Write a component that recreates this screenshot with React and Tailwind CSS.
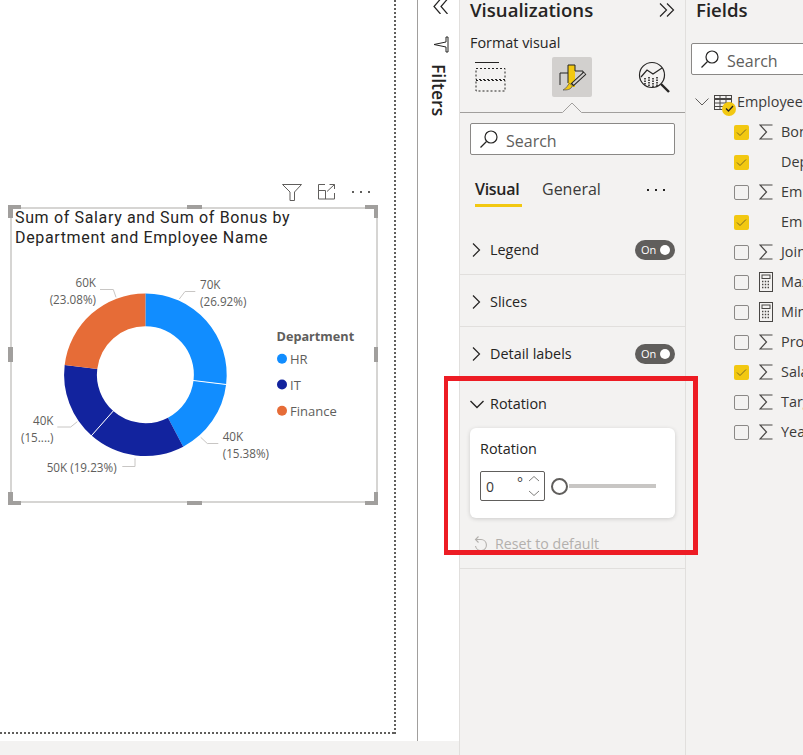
import React from 'react';

const SLICES = [
  { pct: 26.92, color: '#118DFF' },
  { pct: 15.38, color: '#118DFF' },
  { pct: 19.23, color: '#12239E' },
  { pct: 15.38, color: '#12239E' },
  { pct: 23.09, color: '#E66C37' },
];

const FIELDS = [
  { name: 'Bonus', checked: true, icon: 'sigma' },
  { name: 'Department', checked: true },
  { name: 'Employee ID', icon: 'sigma' },
  { name: 'Employee Name', checked: true },
  { name: 'Joining Year', icon: 'sigma' },
  { name: 'Max Salary', icon: 'calc' },
  { name: 'Min Salary', icon: 'calc' },
  { name: 'Projects', icon: 'sigma' },
  { name: 'Salary', checked: true, icon: 'sigma' },
  { name: 'Target', icon: 'sigma' },
  { name: 'Years', icon: 'sigma' },
];

// donut geometry, page coordinates
const CX = 145.4;
const CY = 374.7;
const R1 = 81.3;
const R0 = 48.5;

function pt(r, a) {
  const rad = (a * Math.PI) / 180;
  return [CX + r * Math.sin(rad), CY - r * Math.cos(rad)];
}

function slicePath(a0, a1) {
  const large = a1 - a0 > 180 ? 1 : 0;
  const [x0, y0] = pt(R1, a0);
  const [x1, y1] = pt(R1, a1);
  const [x2, y2] = pt(R0, a1);
  const [x3, y3] = pt(R0, a0);
  return `M${x0} ${y0}A${R1} ${R1} 0 ${large} 1 ${x1} ${y1}L${x2} ${y2}A${R0} ${R0} 0 ${large} 0 ${x3} ${y3}Z`;
}

function Donut() {
  let angle = 0;
  const parts = SLICES.map((s) => {
    const a0 = angle;
    angle += s.pct * 3.6;
    return { ...s, a0, a1: angle };
  });
  const sep = (a) => {
    const [x0, y0] = pt(R0 - 1, a);
    const [x1, y1] = pt(R1 + 1, a);
    return <line x1={x0} y1={y0} x2={x1} y2={y1} stroke="#fff" strokeWidth="1" />;
  };
  return (
    <svg viewBox="10 207 368 296" className="absolute -left-[2px] -top-[2px] w-[368px] h-[296px] font-['Open_Sans',sans-serif]">
      {parts.map((p) => (
        <path key={p.a0} d={slicePath(p.a0, p.a1)} fill={p.color} />
      ))}
      {sep(parts[0].a1)}
      {sep(parts[2].a1)}

      <g fill="none" stroke="#c8c6c4" strokeWidth="1">
        <path d="M100 289.5H113.3L116 297.3" />
        <path d="M195.3 291.5H185L179.3 299" />
        <path d="M200.7 437.3L207.3 443.5H218.3" />
        <path d="M122.3 466.5H135V458.3" />
        <path d="M57.3 427H70.7L77.3 421.7" />
      </g>

      <g fill="#605e5c" fontSize="11.7" dominantBaseline="central">
        <text x="96" y="281.5" textAnchor="end">60K</text>
        <text x="96" y="298.5" textAnchor="end">(23.08%)</text>
        <text x="200" y="283.5">70K</text>
        <text x="200" y="300.5">(26.92%)</text>
        <text x="222.7" y="435.5">40K</text>
        <text x="222.7" y="452.5">(15.38%)</text>
        <text x="46.7" y="466.5">50K (19.23%)</text>
        <text x="53.5" y="419.5" textAnchor="end">40K</text>
        <text x="53.5" y="436.5" textAnchor="end">(15....)</text>
      </g>

      <text x="276.5" y="336" fill="#605e5c" fontSize="12.7" fontWeight="700" dominantBaseline="central">Department</text>
      <g fill="#605e5c" fontSize="13" dominantBaseline="central">
        <circle cx="282" cy="358.7" r="5" fill="#118DFF" />
        <text x="290" y="358.7">HR</text>
        <circle cx="282" cy="384.5" r="5" fill="#12239E" />
        <text x="290" y="384.5">IT</text>
        <circle cx="282" cy="410.7" r="5" fill="#E66C37" />
        <text x="290" y="410.7">Finance</text>
      </g>
    </svg>
  );
}

function VisualHandles() {
  const corner = 'absolute w-[13px] h-[13px] border-[#a19f9d]';
  return (
    <>
      <div className={`${corner} -left-[4px] -top-[4px] border-l-[5px] border-t-[4px]`} />
      <div className={`${corner} -right-[2px] -top-[4px] border-r-[4px] border-t-[4px]`} />
      <div className={`${corner} -left-[4px] -bottom-[4px] border-l-[5px] border-b-[4px]`} />
      <div className={`${corner} -right-[2px] -bottom-[4px] border-r-[4px] border-b-[4px]`} />
      <div className="absolute left-[175px] -top-[4px] w-[15px] h-[4px] bg-[#a19f9d]" />
      <div className="absolute left-[175px] -bottom-[4px] w-[15px] h-[4px] bg-[#a19f9d]" />
      <div className="absolute -left-[4px] top-[138px] w-[5px] h-[15px] bg-[#a19f9d]" />
      <div className="absolute -right-[2px] top-[138px] w-[4px] h-[15px] bg-[#a19f9d]" />
    </>
  );
}

function VisualHeaderIcons() {
  return (
    <div className="flex items-center h-[18px] ml-[272px] gap-[16px]">
      <svg width="20" height="17" viewBox="0 0 20 17" fill="none" stroke="#605e5c" strokeWidth="1">
        <path d="M0.5 0.5H19.5L12.5 8V16.5H8V8Z" />
      </svg>
      <svg width="18" height="16" viewBox="0 0 18 16" fill="none" stroke="#605e5c" strokeWidth="1">
        <path d="M7 0.5H0.5V15H16.5V9" />
        <path d="M0.5 6.5H7.5V15" />
        <path d="M9 7.5L16.5 0.5M11.5 0.5H16.5V5" />
      </svg>
      <svg width="18" height="4" viewBox="0 0 18 4" fill="#605e5c">
        <rect x="0" y="1" width="2" height="2" />
        <rect x="8" y="1" width="2" height="2" />
        <rect x="16" y="1" width="2" height="2" />
      </svg>
    </div>
  );
}

function Canvas() {
  return (
    <div className="w-[396px] h-[734px] shrink-0 pt-[183px] pl-[10px] bg-no-repeat [background-image:repeating-linear-gradient(to_bottom,#605e5c_0_2px,transparent_2px_4px),repeating-linear-gradient(to_right,#605e5c_0_2px,transparent_2px_4px)] [background-size:2px_100%,100%_2px] [background-position:394px_0,0_732px]">
      <VisualHeaderIcons />
      <div className="relative w-[368px] h-[296px] mt-[6px] border-2 border-[#d6d5d3] bg-white">
        <Donut />
        <div className="relative pl-[3px] -mt-[1px] font-['Roboto',sans-serif] text-[16px] leading-[20px] tracking-[0.65px] text-[#252423]">
          Sum of Salary and Sum of Bonus by
          <br />
          Department and Employee Name
        </div>
        <VisualHandles />
      </div>
    </div>
  );
}

function FiltersStrip() {
  return (
    <div className="w-[42px] shrink-0 h-full border-l border-[#a19f9d] flex flex-col items-center">
      <svg width="16" height="14" viewBox="0 0 16 14" fill="none" stroke="#252423" strokeWidth="1.2" className="ml-[4px]">
        <path d="M7.5 -1L1 6.5L7.5 14M14.5 -1L8 6.5L14.5 14" />
      </svg>
      <svg width="16" height="17" viewBox="0 0 16 17" fill="none" stroke="#252423" strokeWidth="1" className="mt-[22px] ml-[4px]">
        <path d="M15 1V16H13V11L1 8.5L13 6V1Z" />
      </svg>
      <span className="mt-[11px] ml-[1px] [writing-mode:vertical-rl] font-['Open_Sans',sans-serif] font-semibold text-[17.5px] leading-[20px] text-[#252423]">
        Filters
      </span>
    </div>
  );
}

function SearchBox({ className }) {
  return (
    <div className={`flex items-center h-[32px] bg-white border border-[#8a8886] rounded-[2px] ${className}`}>
      <svg width="20" height="20" viewBox="0 0 20 20" fill="none" strokeWidth="1.2" className="ml-[8px] shrink-0">
        <circle cx="12" cy="8" r="6" stroke="#252423" />
        <path d="M7.5 12.5L1.5 18.5" stroke="#252423" />
      </svg>
      <span className="ml-[7px] mt-[3px] text-[16px] leading-[20px] text-[#605e5c]">Search</span>
    </div>
  );
}

function Toggle() {
  return (
    <div className="ml-auto flex items-center w-[40px] h-[20px] rounded-full bg-[#605e5c] pl-[6px] pr-[5px]">
      <span className="text-[11px] leading-[20px] text-white">On</span>
      <span className="ml-auto w-[10px] h-[10px] rounded-full bg-white" />
    </div>
  );
}

function ChevronRightIcon() {
  return (
    <svg width="10" height="14" viewBox="0 0 10 14" fill="none" stroke="#252423" strokeWidth="1.2" className="shrink-0">
      <path d="M2 0.5L8.5 7L2 13.5" />
    </svg>
  );
}

function Section({ label, toggle }) {
  return (
    <div className="flex items-center h-[52px] pt-[2px] pl-[11px] pr-[10px] border-b border-[#e1dfdd]">
      <ChevronRightIcon />
      <span className="ml-[9px] text-[14.4px] text-[#252423]">{label}</span>
      {toggle && <Toggle />}
    </div>
  );
}

function FormatIcons() {
  return (
    <div className="flex items-center h-[40px] mt-[4px] relative">
      <svg width="32" height="32" viewBox="0 0 32 32" fill="none" stroke="#252423" className="ml-[15px]">
        <path d="M0 1.5H24" strokeWidth="1" />
        <rect x="1" y="7.5" width="29" height="11" strokeDasharray="2 2" />
        <rect x="1" y="19.5" width="29" height="10.5" strokeDasharray="2 2" />
      </svg>
      <div className="ml-[45px] w-[40px] h-[40px] rounded-[2px] bg-[#d2d0ce] flex items-center justify-center">
        <svg width="30" height="30" viewBox="0 0 30 30" fill="none">
          <rect x="11" y="3" width="7" height="22" fill="#f2c811" />
          <path d="M3 23V11H11M11 21V3H18V9H26V12" stroke="#252423" strokeWidth="1" />
          <path d="M28 11L15 23" stroke="#252423" strokeWidth="4" />
          <path d="M27.5 11.5L16 22" stroke="#d2d0ce" strokeWidth="2" />
          <path d="M6 28C10 28 14 28 15.5 23.5L12.5 21.5C10.5 23 10 26 6 28Z" fill="#f2c811" stroke="#605e5c" strokeWidth="0.8" />
        </svg>
      </div>
      <svg width="34" height="34" viewBox="0 0 34 34" fill="none" stroke="#252423" className="ml-[46px]">
        <circle cx="14" cy="15" r="12.5" strokeWidth="1.2" />
        <path d="M3 17L9 10L15 14L24 8" strokeWidth="1.2" />
        <path d="M7 18V25M11 17V27M15 18V27M19 17V26" strokeWidth="1.6" strokeDasharray="1.5 1" />
        <path d="M23 24L31 32" strokeWidth="2.4" />
      </svg>
    </div>
  );
}

function VizPane() {
  return (
    <div className="w-[227px] shrink-0 h-full border-x border-[#e1dfdd] bg-[#f3f2f1] font-['Open_Sans',sans-serif] text-[#252423] relative">
      <div className="flex items-center h-[20px] pl-[10px] pr-[10px]">
        <span className="text-[18.6px] font-semibold leading-[20px]">Visualizations</span>
        <svg width="16" height="14" viewBox="0 0 16 14" fill="none" stroke="#252423" strokeWidth="1.2" className="ml-auto">
          <path d="M1 0.5L7.5 7L1 13.5M8 0.5L14.5 7L8 13.5" />
        </svg>
      </div>
      <div className="mt-[13px] pl-[10px] text-[14.4px] leading-[20px]">Format visual</div>
      <FormatIcons />
      <svg width="225" height="16" viewBox="0 0 225 16" fill="none" className="block">
        <path d="M0 15.5H102.5L112 6L121.5 15.5H225" stroke="#a19f9d" strokeWidth="1" />
      </svg>
      <SearchBox className="mx-[10px] mt-[10px] w-[205px]" />
      <div className="flex items-start h-[68px] pl-[15px] pr-[20px] pt-[23px]">
        <div className="border-b-[3px] border-[#f2c811] h-[29px] w-[47px] font-semibold text-[16px] leading-[22px] whitespace-nowrap tracking-[-0.3px]">Visual</div>
        <div className="ml-[20px] text-[16px] leading-[22px] text-[#3b3a39]">General</div>
        <svg width="18" height="4" viewBox="0 0 18 4" fill="#252423" className="ml-auto mt-[10px]">
          <rect x="0" y="1" width="2" height="2" />
          <rect x="8" y="1" width="2" height="2" />
          <rect x="16" y="1" width="2" height="2" />
        </svg>
      </div>
      <Section label="Legend" toggle />
      <Section label="Slices" />
      <Section label="Detail labels" toggle />
      <div className="h-[190px] border-b border-[#e1dfdd] px-[10px]">
        <div className="flex items-center h-[49px]">
          <svg width="14" height="10" viewBox="0 0 14 10" fill="none" stroke="#252423" strokeWidth="1.4" className="shrink-0">
            <path d="M0.5 2L7 8.5L13.5 2" />
          </svg>
          <span className="ml-[6px] text-[14.4px]">Rotation</span>
        </div>
        <div className="h-[90px] rounded-[6px] bg-white shadow-[0_1px_4px_rgba(0,0,0,0.16)] px-[10px] pt-[11px]">
          <div className="text-[14.4px] leading-[20px]">Rotation</div>
          <div className="flex items-center mt-[12px]">
            <div className="flex items-center w-[65px] h-[30px] border border-[#605e5c] rounded-[2px] pl-[5px] pr-[3px]">
              <span className="text-[14px] text-[#3b3a39]">0</span>
              <span className="ml-[23px] text-[14px] leading-[14px] -mt-[6px] text-[#3b3a39]">°</span>
              <svg width="12" height="22" viewBox="0 0 12 22" fill="none" stroke="#605e5c" strokeWidth="0.8" className="ml-auto mr-[1px]">
                <path d="M1 6L6 1.5L11 6M1 16L6 20.5L11 16" />
              </svg>
            </div>
            <div className="ml-[6px] w-[17px] h-[17px] rounded-full border-2 border-[#605e5c] bg-white shrink-0" />
            <div className="ml-[1px] w-[87px] h-[4px] bg-[#c8c6c4]" />
          </div>
        </div>
        <div className="flex items-center mt-[16px] h-[20px] text-[#b3b0ad]">
          <svg width="16" height="16" viewBox="0 0 16 16" fill="none" stroke="#b3b0ad" strokeWidth="1.1" className="ml-[2px] shrink-0">
            <path d="M4 3.5H9A5.5 5.5 0 1 1 3.5 10" />
            <path d="M6.5 0.5L3.5 3.5L6.5 6.5" />
          </svg>
          <span className="ml-[7px] text-[14.2px]">Reset to default</span>
        </div>
      </div>
    </div>
  );
}

function SigmaIcon() {
  return (
    <svg width="14" height="16" viewBox="0 0 14 16" fill="none" stroke="#484644" strokeWidth="1.2">
      <path d="M13.5 1H1L7.5 8L1 15H13.5" />
    </svg>
  );
}

function CalcIcon() {
  return (
    <svg width="14" height="20" viewBox="0 0 14 20" fill="none" stroke="#484644">
      <rect x="0.5" y="0.5" width="13" height="19" strokeWidth="1" />
      <rect x="3" y="3" width="8" height="3.5" strokeWidth="1" />
      <path d="M3 9.5H11M3 12.5H11M3 15.5H11" strokeWidth="1.4" strokeDasharray="1.4 1.4" />
    </svg>
  );
}

function Checkbox({ checked }) {
  if (!checked) {
    return <div className="w-[15px] h-[15px] shrink-0 rounded-[2px] border border-[#8a8886] bg-[#f3f2f1]" />;
  }
  return (
    <div className="w-[15px] h-[15px] shrink-0 rounded-[2px] bg-[#f2c811] flex items-center justify-center">
      <svg width="11" height="9" viewBox="0 0 11 9" fill="none" stroke="#7a6a20" strokeWidth="1">
        <path d="M1 4.5L4 7.5L10 1.5" />
      </svg>
    </div>
  );
}

function FieldRow({ field }) {
  return (
    <div className="flex items-center h-[30px] pl-[48px]">
      <Checkbox checked={field.checked} />
      <div className="w-[14px] ml-[10px] shrink-0 flex justify-center">
        {field.icon === 'sigma' && <SigmaIcon />}
        {field.icon === 'calc' && <CalcIcon />}
      </div>
      <span className="ml-[8px] text-[14.4px] whitespace-nowrap text-[#3b3a39]">{field.name}</span>
    </div>
  );
}

function FieldsPane() {
  return (
    <div className="flex-1 min-w-0 h-full overflow-hidden bg-[#f3f2f1] font-['Open_Sans',sans-serif] text-[#252423]">
      <div className="pl-[10px] h-[20px] text-[18.6px] font-semibold leading-[20px]">Fields</div>
      <SearchBox className="ml-[5px] mt-[23px] w-[140px]" />
      <div className="mt-[12px]">
        <div className="flex items-center h-[30px] pl-[9px]">
          <svg width="14" height="8" viewBox="0 0 14 8" fill="none" stroke="#605e5c" strokeWidth="1" className="shrink-0">
            <path d="M0.5 0.5L7 7L13.5 0.5" />
          </svg>
          <div className="relative ml-[5px] w-[19px] h-[15px] shrink-0">
            <svg width="19" height="15" viewBox="0 0 19 15" fill="none" stroke="#484644" strokeWidth="1">
              <rect x="0.5" y="0.5" width="17" height="14" />
              <path d="M0.5 4H17.5" strokeWidth="2" />
              <path d="M0.5 8H17.5M0.5 11.5H17.5M6 0.5V14.5M12 0.5V14.5" />
            </svg>
            <div className="absolute left-[8px] top-[7px] w-[14px] h-[14px] rounded-full bg-[#f2c811] flex items-center justify-center">
              <svg width="9" height="7" viewBox="0 0 9 7" fill="none" stroke="#252423" strokeWidth="1.3">
                <path d="M1 3.5L3.5 6L8 1" />
              </svg>
            </div>
          </div>
          <span className="ml-[4px] text-[14.4px] whitespace-nowrap text-[#3b3a39]">Employee</span>
        </div>
        {FIELDS.map((f) => (
          <FieldRow key={f.name} field={f} />
        ))}
      </div>
    </div>
  );
}

export default function App() {
  return (
    <div className="relative flex w-[803px] h-[755px] overflow-hidden bg-white">
      <div className="w-[459px] shrink-0 h-full flex flex-col">
        <div className="flex flex-1 min-h-0">
          <div className="w-[417px] shrink-0 h-full bg-white">
            <Canvas />
          </div>
          <FiltersStrip />
        </div>
        <div className="h-[14px] bg-[#f3f2f1]" />
      </div>
      <VizPane />
      <FieldsPane />
      {/* red annotation drawn on top of the screenshot */}
      <div className="absolute left-[444px] top-[376px] w-[254px] h-[179px] border-[5px] border-l-4 border-[#ed1c24] pointer-events-none" />
    </div>
  );
}
